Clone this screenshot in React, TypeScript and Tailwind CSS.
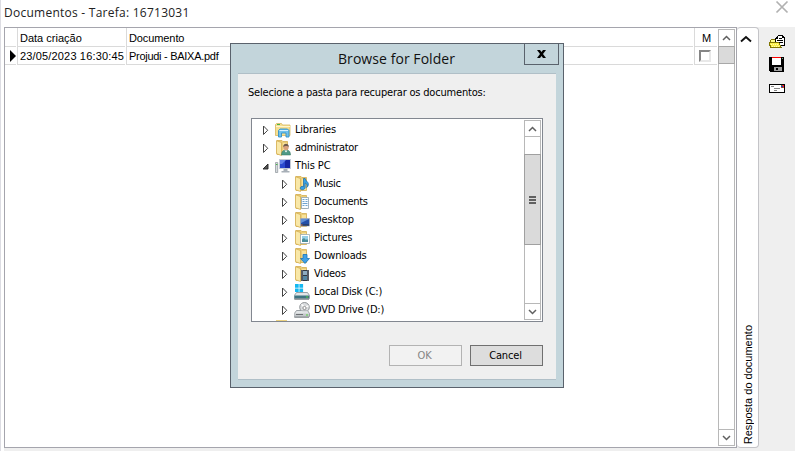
import React from "react";

const tahoma = "font-['DejaVu_Sans_Condensed','DejaVu_Sans',sans-serif] text-[11px]";
const sans = "font-['Liberation_Sans',sans-serif] text-[11px]";

type Kind =
  | "libraries" | "user" | "pc" | "music" | "documents" | "desktop"
  | "pictures" | "downloads" | "videos" | "disk" | "dvd" | "folder";

const items: { label: string; kind: Kind; level: number; open?: boolean; track: string }[] = [
  { label: "Libraries", kind: "libraries", level: 0, track: "tracking-[-0.2px]" },
  { label: "administrator", kind: "user", level: 0, track: "tracking-[-0.32px]" },
  { label: "This PC", kind: "pc", level: 0, open: true, track: "tracking-[-0.1px]" },
  { label: "Music", kind: "music", level: 1, track: "tracking-[-0.3px]" },
  { label: "Documents", kind: "documents", level: 1, track: "tracking-[-0.3px]" },
  { label: "Desktop", kind: "desktop", level: 1, track: "tracking-[-0.15px]" },
  { label: "Pictures", kind: "pictures", level: 1, track: "tracking-[-0.1px]" },
  { label: "Downloads", kind: "downloads", level: 1, track: "tracking-[-0.2px]" },
  { label: "Videos", kind: "videos", level: 1, track: "tracking-[-0.2px]" },
  { label: "Local Disk (C:)", kind: "disk", level: 1, track: "tracking-[-0.2px]" },
  { label: "DVD Drive (D:)", kind: "dvd", level: 1, track: "tracking-[-0.22px]" },
  { label: "", kind: "folder", level: 0, track: "" },
];

function FolderBase() {
  return (
    <g>
      <path d="M2 .5h5l1 1h4.500v13H2z" fill="#ebcd78" stroke="#d4ae52" strokeWidth=".8" />
      <path d="M8 3h4v11H8z" fill="#f8e29b" />
      <path d="M1.500 .7l5 1.800v13l-5-1.800z" fill="#f9e8a8" stroke="#d4ae52" strokeWidth=".8" />
    </g>
  );
}

function TreeIcon({ kind }: { kind: Kind }) {
  const folder = !["libraries", "pc", "disk", "dvd", "folder"].includes(kind);
  return (
    <svg width="16" height="16" viewBox="0 0 16 16" className="shrink-0">
      {folder && <FolderBase />}
      {kind === "folder" && <path d="M1 0h11v14H1z" fill="#ecd282" />}
      {kind === "libraries" && (
        <g>
          <path d="M.5 2.5l1-1h5l1 1.5h7.500v10.500H.5z" fill="#f6df91" stroke="#d8b65e" strokeWidth=".8" />
          <path d="M2 2.5h3" stroke="#43b649" />
          <path d="M1 4.500h14" stroke="#fff6cf" />
          <path d="M3.5 15V8.5l1.500-1.500h7.500l1.500 1.500V15h-3v-4h-4.500v4z" fill="#6fc1ec" stroke="#3191c8" strokeWidth=".9" />
          <path d="M4.5 8.500h8.500" stroke="#d7f2ff" />
        </g>
      )}
      {kind === "user" && (
        <g>
          <path d="M6.500 15c0-4 2-5 4.500-5s4.500 1 4.500 5z" fill="#4f9a86" stroke="#37745f" strokeWidth=".5" />
          <path d="M9.5 10.5l1.5 2 1.5-2z" fill="#fff" />
          <circle cx="11" cy="7.3" r="2.7" fill="#d8a17e" />
          <path d="M8.2 7c0-4.200 5.600-4.200 5.700 0-1-.8-3.700-1.600-5.700 0z" fill="#6e5a4b" />
        </g>
      )}
      {kind === "pc" && (
        <g>
          <path d="M.5 4.5h2.2v10H.5z" fill="#d5d9dc" stroke="#8a9298" strokeWidth=".7" />
          <path d="M1 6.5h1.5" stroke="#47b649" />
          <path d="M4.500 1.500h11v9h-11z" fill="#1526a4" stroke="#c3cad5" />
          <path d="M5 2h5v8H5z" fill="#2a49cf" />
          <path d="M5 2h6L7 6H5z" fill="#5f80ea" />
          <path d="M8.5 11h4v2h2v1.5h-8V13h2z" fill="#a7afb7" />
        </g>
      )}
      {kind === "music" && (
        <path d="M9.500 2.500v8c-2-.6-3.500.6-3.200 2 .5 1.900 4.600 1.500 4.900-1V7c2 1 2.400 2.400 1.500 4.500 3.200-2.800 1.300-5.500-.5-6.700L11.200 2.500z" fill="#37a2e5" stroke="#1766a5" strokeWidth=".7" />
      )}
      {kind === "documents" && (
        <g>
          <path d="M7.5 3.5h7v11h-7z" fill="#fafdff" stroke="#8ba2b3" strokeWidth=".8" />
          <path d="M8.5 5.5h2m1 0h2m-5 2h2m1 0h2m-5 2h5m-5 2h2m1 0h2" stroke="#6da3cf" />
        </g>
      )}
      {kind === "desktop" && (
        <g>
          <path d="M6.500 6.500h9v7.500h-9z" fill="#2450a8" stroke="#aab5c3" strokeWidth=".7" />
          <path d="M7 7h8L7 11z" fill="#5f8fd8" />
          <path d="M7 13h8" stroke="#293043" />
          <path d="M7 13h1.5" stroke="#e07a42" />
        </g>
      )}
      {kind === "pictures" && (
        <g>
          <path d="M6.5 4.500h9v9h-9z" fill="#fff" stroke="#9baab4" strokeWidth=".8" />
          <path d="M8 6h6v6H8z" fill="#94cee8" />
          <path d="M8 12v-2.500l2-1.500 2 2 1-1 1 1v2z" fill="#4a8f9b" />
        </g>
      )}
      {kind === "downloads" && (
        <path d="M9 6.500h4v4h2.500L11 15.500 6.500 10.500H9z" fill="#3fa0e6" stroke="#1674b9" strokeWidth=".8" />
      )}
      {kind === "videos" && (
        <g>
          <path d="M7 4h8v11H7z" fill="#303640" />
          <path d="M9 5h4v4H9z" fill="#8dabc0" />
          <path d="M9 10h4v4H9z" fill="#5587a3" />
          <path d="M8 4.5V15m6-10.5V15" stroke="#e8eef2" strokeDasharray="1 1" strokeWidth=".8" />
        </g>
      )}
      {kind === "dvd" && (
        <g>
          <circle cx="10.5" cy="5.3" r="4.8" fill="#dadddf" stroke="#85898c" strokeWidth=".9" />
          <path d="M10.5 5.3L7.500 2.300M10.5 5.3l4-1.500" stroke="#fff" strokeWidth="1.3" />
        </g>
      )}
      {(kind === "disk" || kind === "dvd") && (
        <g>
          <path d="M2.500 8.500h11l2 3v3l-.5.7H.5l-.2-.7v-3z" fill="#e3e6e8" stroke="#858c91" strokeWidth=".8" />
          <path d="M.5 11.500h14.500v3H.5z" fill={kind === "disk" ? "#3f7481" : "#c4c8cb"} />
          <path d="M.5 15h14.500" stroke="#686f74" strokeWidth=".7" />
          <path d="M12 13h2" stroke="#50d63b" />
        </g>
      )}
      {kind === "disk" && (
        <path d="M1 0h3.7v3.7H1zM5.4 0h3.7v3.7H5.4zM1 4.4h3.7v3.7H1zM5.4 4.4h3.7v3.7H5.4z" fill="#14b8f1" />
      )}
      {kind === "dvd" && (
        <g>
          <path d="M7 8.500a4 4 0 0 0 7 0z" fill="#dadddf" />
          <circle cx="10.500" cy="6" r="1.600" fill="#fff" stroke="#777" strokeWidth=".8" />
          <path d="M2 12.500h7" stroke="#6d7174" />
        </g>
      )}
    </svg>
  );
}

function Expander({ open }: { open?: boolean }) {
  return (
    <svg width="7" height="10" viewBox="0 0 7 10" className="shrink-0">
      {open ? (
        <path d="M6 3v5H1z" fill="#555" stroke="#222" strokeWidth=".9" />
      ) : (
        <path d="M1.500 1v8.500l4.200-4.250z" fill="#fff" stroke="#444" strokeWidth="1" />
      )}
    </svg>
  );
}

function Chevron({ down }: { down?: boolean }) {
  return (
    <svg width="11" height="8" viewBox="0 0 11 8">
      <path d={down ? "M2 2l3.5 3.5L9 2" : "M2 6l3.5-3.5L9 6"} fill="none" stroke="#606060" strokeWidth="1.5" />
    </svg>
  );
}

function Dialog() {
  return (
    <section className="absolute left-[229px] top-[43px] flex h-[345px] w-[334px] flex-col border border-[#5a626c] bg-[#c3d5db] px-[7px] pb-[7px]">
      <header className="flex h-[29px] shrink-0 justify-end">
        <h2 className="flex-1 pl-[100px] pt-[5px] font-['Open_Sans',sans-serif] text-[14px] leading-[20px] tracking-[0.06px] text-[#111] whitespace-nowrap">
          Browse for Folder
        </h2>
        <button className="-mt-px mr-[-3px] flex h-[22px] w-[35px] items-center justify-center border border-[#5a626c]">
          <svg width="9" height="8" viewBox="0 0 9 8">
            <path d="M0 0h3l1.5 2L6 0h3L6 4l3 4H6L4.500 6 3 8H0l3-4z" fill="#000" />
          </svg>
        </button>
      </header>
      <div className="flex flex-1 flex-col border-y border-[#b0bfc7] bg-[#efefef]">
        <p className={`${tahoma} ml-[10px] mt-[11px] h-[16px] leading-[16px] tracking-[-0.19px] whitespace-nowrap text-black`}>
          Selecione a pasta para recuperar os documentos:
        </p>
        <div className="ml-[13px] mt-[17px] flex h-[204px] w-[292px] justify-between overflow-hidden border border-[#828790] bg-white pr-px">
          <ul className="pt-[2px]">
            {items.map((it, i) => (
              <li key={i} className={`flex h-[18px] items-center ${it.level ? "pl-[29px]" : "pl-[10px]"}`}>
                <Expander open={it.open} />
                <span className="w-[6px]" />
                <TreeIcon kind={it.kind} />
                <span className={`${tahoma} ${it.track} -mt-px ml-[4px] leading-[14px] whitespace-nowrap text-black`}>{it.label}</span>
              </li>
            ))}
          </ul>
          <div className="my-px flex w-[17px] flex-col border border-[#b8b8b8]">
            <div className="flex h-[16px] items-center justify-center border-b border-[#b8b8b8]"><Chevron /></div>
            <div className="h-[17px]" />
            <div className="-mx-px flex h-[91px] flex-col items-center justify-center gap-px border border-[#a0a0a0] bg-[#dadada]">
              <i className="h-[2px] w-[7px] bg-[#606060]" />
              <i className="h-[2px] w-[7px] bg-[#606060]" />
              <i className="h-[2px] w-[7px] bg-[#606060]" />
            </div>
            <div className="flex-1" />
            <div className="flex h-[16px] items-center justify-center border-t border-[#b8b8b8]"><Chevron down /></div>
          </div>
        </div>
        <div className={`${tahoma} ml-[151px] mt-[23px] flex gap-[8px] tracking-[-0.15px]`}>
          <button className="h-[21px] w-[73px] border border-[#b3b3b3] bg-[#f2f2f2] pr-[2px] pt-[2px] text-[#858585]">OK</button>
          <button className="h-[21px] w-[73px] border border-[#707070] bg-[#dddddd] pr-[2px] pt-[2px] text-black">Cancel</button>
        </div>
      </div>
    </section>
  );
}

function Cell({ className, children }: { className: string; children?: React.ReactNode }) {
  return <div className={`flex items-center border-[#dadada] ${className}`}>{children}</div>;
}

export default function App() {
  return (
    <main className="relative flex h-[451px] w-[795px] flex-col overflow-hidden border-l border-[#dddde3] bg-white">
      <header className="flex h-[27px] shrink-0 items-start justify-between pl-[3px] pr-[6px]">
        <h1 className="mt-[3px] font-['Open_Sans',sans-serif] text-[12px] leading-[19px] tracking-[0.25px] text-[#222] whitespace-nowrap">
          Documentos - Tarefa: 16713031
        </h1>
        <svg width="14" height="14" viewBox="0 0 14 14">
          <path d="M1.500 1.500l11 11m0-11l-11 11" stroke="#b1b1b1" strokeWidth="1.7" />
        </svg>
      </header>
      <div className="flex flex-1 bg-[#efefef]">
        <div className="w-[3px] bg-white" />
        <div className={`${sans} flex h-[421px] w-[733px] border border-[#a5a5ad] bg-white text-black`}>
          <div className="flex-1">
            <div className="flex h-[19px] gap-px">
              <Cell className="w-[11px] border-b" />
              <Cell className="w-[108px] border-b border-l pl-[2px] pt-[2px]">Data criação</Cell>
              <Cell className="w-[567px] border-b border-l pl-[2px] pt-[2px] tracking-[-0.1px]">Documento</Cell>
              <Cell className="w-[23px] border-b border-l pl-[7px] pt-[2px]">M</Cell>
            </div>
            <div className="flex h-[18px] gap-px">
              <Cell className="w-[11px] border-b pl-[5px]">
                <svg width="6" height="12" viewBox="0 0 6 12"><path d="M0 0l6 6-6 6z" fill="#000" /></svg>
              </Cell>
              <Cell className="w-[108px] border-b border-l pl-[2px] pt-px tracking-[0.16px] whitespace-nowrap">23/05/2023 16:30:45</Cell>
              <Cell className="w-[567px] border-b border-l pl-[2px] pt-px tracking-[-0.28px]">Projudi - BAIXA.pdf</Cell>
              <Cell className="w-[23px] border-b border-l pl-[4px]">
                <span className="h-[12px] w-[12px] border-2 border-b-[#e8e8e8] border-l-[#858585] border-r-[#e8e8e8] border-t-[#858585] bg-white" />
              </Cell>
            </div>
          </div>
          <div className="my-px mr-px flex w-[17px] flex-col border border-[#b8b8b8]">
            <div className="flex h-[16px] items-center justify-center"><Chevron /></div>
            <div className="-mx-px h-[18px] border border-[#a8a8a8] bg-[#dadada]" />
            <div className="flex-1" />
            <div className="flex h-[16px] items-center justify-center border-t border-[#b8b8b8]"><Chevron down /></div>
          </div>
        </div>
        <div className="flex h-[421px] w-[22px] flex-col items-center justify-between rounded-[4px] border border-l-0 border-[#c4c4c8] bg-white pb-[3px] pt-[7px]">
          <svg width="12" height="8" viewBox="0 0 12 8" className="mr-[3px]">
            <path d="M1 6.500l5-4.500 5 4.500" fill="none" stroke="#111" strokeWidth="1.900" />
          </svg>
          <span className={`${sans} rotate-180 leading-[12px] whitespace-nowrap text-black [writing-mode:vertical-rl]`}>
            Resposta do documento
          </span>
        </div>
        <aside className="flex flex-col pl-[10px] pt-[7px]">
          <svg width="17" height="16" viewBox="0 0 17 16" shapeRendering="crispEdges">
            <path d="M1 6h1V5h4v1h2v8H1z" fill="#ffff8c" />
            <path d="M1 6h1v7H1zM2 5h4v1H2z" fill="#817600" />
            <path d="M6 4h1V3h1V2h1V1h5v1h1v1h1v9H6z" fill="#000" />
            <path d="M7 5h2V2h4v2h2v7H7z" fill="#fff" />
            <path d="M8 4h1v1H8zM10 4h3v1h-3zM8 6h6v1H8zM8 8h6v1H8z" fill="#000" />
            <path d="M0 8h10v1h1v2h1v2h1v1H1v-2H0z" fill="#817600" />
            <path d="M1 9h9v2h1v2H2v-2H1z" fill="#fbf04a" />
            <path d="M2 10.500h8M3 12.500h8" stroke="#fffbb3" strokeDasharray="1 1" />
          </svg>
          <svg width="16" height="16" viewBox="0 0 16 16" shapeRendering="crispEdges" className="mt-[6px]">
            <path d="M0 1h15v15H1l-1-1z" fill="#000" />
            <path d="M3 1h9v8H3z" fill="#fff" />
            <path d="M3 1h9v1H3z" fill="#f00" />
            <path d="M13 2h1v1h-1z" fill="#7a9d7a" />
            <path d="M5 11h8v4H5z" fill="#a0a0a0" />
            <path d="M7 12h2v2H7z" fill="#000" />
          </svg>
          <svg width="17" height="10" viewBox="0 0 17 10" shapeRendering="crispEdges" className="mt-[12px]">
            <path d="M0 0h16v9H0z" fill="#000" />
            <path d="M1 1h14v7H1z" fill="#fff" />
            <path d="M2 2.500h3M5 4.500h6M5 6.500h3" stroke="#888" />
            <path d="M12 1h3v3h-3z" fill="#e22" />
            <path d="M12 1h1v1h-1z" fill="#1a9d42" />
            <path d="M12 2h2v1h-2z" fill="#23c" />
            <path d="M13 3h1v1h-1z" fill="#1a9d42" />
          </svg>
        </aside>
      </div>
      <Dialog />
    </main>
  );
}
